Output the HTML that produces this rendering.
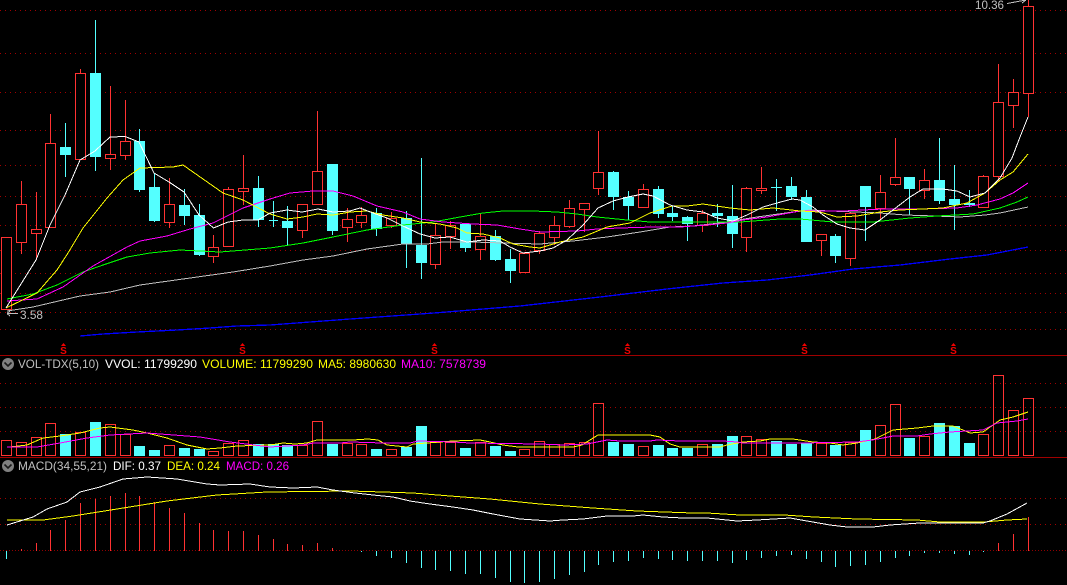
<!DOCTYPE html>
<html>
<head>
<meta charset="utf-8">
<title>Stock chart</title>
<style>
html,body{margin:0;padding:0;background:#000;width:1067px;height:585px;overflow:hidden}
svg{display:block;position:absolute;left:0;top:0}
text{font-family:"Liberation Sans",sans-serif;font-size:12px}
</style>
</head>
<body>
<svg width="1067" height="585" viewBox="0 0 1067 585" xmlns="http://www.w3.org/2000/svg">
<rect width="1067" height="585" fill="#000"/>
<g shape-rendering="crispEdges">
<!-- grids -->
<path fill="none" stroke="#a00000" stroke-dasharray="1 4" d="M0 10.500H1067M0 53.500H1067M0 92.500H1067M0 130.500H1067M0 165.500H1067M0 196.500H1067M0 225.500H1067M0 250.500H1067M0 273.500H1067M0 293.500H1067M0 312.500H1067M0 329.500H1067M0 383.500H1067M0 407.500H1067M0 431.500H1067M0 498.500H1067M0 524.500H1067"/>
<path fill="none" stroke="#900000" stroke-dasharray="1 2" d="M0 550.500H1067"/>
<path fill="none" stroke="#a00000" d="M0 355.500H1067M0 457.500H1067"/>

<!-- red wicks -->
<path fill="none" stroke="#ff3232" d="M21.500 181V254M36.500 192V260M50.500 114V143M80.500 69V73M110.500 86V170M125.500 100V160M169.500 178V228M213.500 235V263M228.500 187V247M243.500 155V205M302.500 230V238M317.500 111V171M347.500 208V242M361.500 207V228M391.500 212V228M435.500 223V269M450.500 221V249M480.500 213V260M524.500 252V253M539.500 231V254M554.500 216V245M569.500 200V228M584.500 209V232M598.500 131V195M643.500 184V189M702.500 210V232M746.500 187V252M761.500 167V194M821.500 240V256M850.500 212V266M880.500 175V219M895.500 138V186M924.500 169V199M983.500 175V208M998.500 64V182M1013.500 79V128M1028.500 0V117"/>
<!-- red bodies -->
<path fill="#000" stroke="#ff3232" d="M1.500 237.500h10v72h-10zM16.500 204.500h10v38h-10zM31.500 229.500h10v4h-10zM45.500 143.500h10v84h-10zM75.500 73.500h10v86h-10zM105.500 154.500h10v4h-10zM120.500 141.500h10v14h-10zM164.500 204.500h10v18h-10zM208.500 247.500h10v9h-10zM223.500 189.500h10v57h-10zM238.500 188.500h10v3h-10zM297.500 204.500h10v26h-10zM312.500 171.500h10v33h-10zM342.500 219.500h10v8h-10zM356.500 215.500h10v7h-10zM386.500 218.500h10v7h-10zM430.500 235.500h10v29h-10zM445.500 225.500h10v11h-10zM475.500 236.500h10v13h-10zM519.500 253.500h10v19h-10zM534.500 233.500h10v17h-10zM549.500 225.500h10v12h-10zM564.500 208.500h10v18h-10zM579.500 203.500h10v6h-10zM593.500 172.500h10v16h-10zM638.500 189.500h10v18h-10zM697.500 213.500h10v12h-10zM741.500 188.500h10v49h-10zM756.500 188.500h10v2h-10zM816.500 234.500h10v6h-10zM845.500 213.500h10v45h-10zM875.500 192.500h10v16h-10zM890.500 177.500h10v7h-10zM919.500 180.500h10v10h-10zM978.500 176.500h10v31h-10zM993.500 102.500h10v74h-10zM1008.500 92.500h10v13h-10zM1023.500 6.500h10v87h-10z"/>
<!-- cyan wicks -->
<path fill="none" stroke="#54ffff" d="M65.500 123V177M95.500 20V171M139.500 129V192M154.500 173V222M184.500 189V225M199.500 204V256M258.500 176V227M273.500 201V227M269 220.500H278M287.500 206V246M332.500 164V235M376.500 208V236M406.500 211V268M421.500 158V279M465.500 223V252M495.500 230V261M510.500 249V283M613.500 171V210M628.500 191V220M658.500 186V218M672.500 206V221M687.500 216V241M717.500 204V227M732.500 185V248M776.500 179V211M771 187.500H782M791.500 177V200M806.500 190V242M835.500 234V263M865.500 186V241M909.500 177V215M939.500 138V204M954.500 165V230M969.500 190V207"/>
<!-- cyan bodies -->
<path fill="#54ffff" d="M60 147h11v8h-11zM90 73h11v84h-11zM134 141h11v49h-11zM149 187h11v34h-11zM179 205h11v11h-11zM194 215h11v40h-11zM253 188h11v32h-11zM282 221h11v7h-11zM327 164h11v67h-11zM371 213h11v16h-11zM401 218h11v26h-11zM416 245h11v18h-11zM460 224h11v24h-11zM490 236h11v24h-11zM505 259h11v12h-11zM608 172h11v25h-11zM623 197h11v9h-11zM653 189h11v25h-11zM667 213h11v4h-11zM682 217h11v7h-11zM712 213h11v3h-11zM727 216h11v18h-11zM786 186h11v11h-11zM801 197h11v45h-11zM830 236h11v20h-11zM860 186h11v21h-11zM904 177h11v12h-11zM934 180h11v21h-11zM949 199h11v6h-11zM964 203h11v2h-11z"/>

<!-- main MAs -->
<polyline fill="none" stroke="#0000ff" stroke-width="1.3" points="80,336 103,334 137,332 177,330 210,328 237,326 270,325 350,319 434,313 520,306 600,297 667,289 723,283 767,280 810,275 853,269 900,265 950,259 987,255 1028,247"/>
<polyline fill="none" stroke="#c0c0c0" stroke-width="1" points="7,311 33,307 80,296 110,292 140,285 183,279 233,272 270,266 303,260 333,256 367,249 403,244 427,244 443,242 473,242 503,243 540,244 573,241 607,237 640,232 670,227 693,226 720,223 757,217 793,212 810,210 830,211 880,213 905,215 935,216 960,217 985,215 1000,213 1028,207"/>
<polyline fill="none" stroke="#00ff00" stroke-width="1" points="7,299 33,294 57,285 83,272 103,265 127,257 150,253 180,250 220,252 270,248 303,243 333,237 367,230 403,225 433,222 460,217 483,213 503,211 533,211 557,212 577,214 597,217 627,220 650,222 690,222 740,222 780,219 800,219 833,222 873,222 910,218 937,216 973,214 1000,208 1017,202 1028,197"/>
<polyline fill="none" stroke="#ff00ff" stroke-width="1" points="7,301 37,299 63,287 93,266 127,247 140,241 167,236 190,229 213,223 243,208 270,199 290,193 313,191 333,191 353,196 377,206 403,212 420,219 443,222 473,224 497,225 520,229 540,232 577,231 597,229 620,228 653,227 680,227 707,225 727,223 743,220 767,217 800,211 843,211 883,209 917,209 957,208 977,205 1000,199 1013,193 1028,183"/>
<polyline fill="none" stroke="#ffff00" stroke-width="1" points="6,308 37,293 57,270 68,253 83,228 107,198 123,180 140,168 173,167 183,165 203,179 223,193 243,200 270,214 287,219 303,217 317,214 333,215 350,212 367,211 383,215 403,218 420,222 440,224 457,228 467,233 483,234 500,238 513,244 530,247 540,248 560,242 583,237 607,227 630,223 650,213 672,206 687,206 703,204 730,208 750,210 773,208 800,211 820,212 837,217 857,216 880,212 900,210 923,209 943,208 967,203 985,193 1000,180 1013,172 1028,154"/>
<polyline fill="none" stroke="#ffffff" stroke-width="1" points="6,308 36,260 50,225 65,195 80,160 95,151 110,137 125,136.500 139,142 154,173 169,182 184,192 199,215 213.500,228 228,222 243,220 258,220 270,213 287,210 302,212 318,209 333,212 350,211 360,208 373,213 387,218 403,226 420,234 435,238 450,237 467,242 483,240 500,241 510,247 523,253 540,251 553,248 567,240 583,225 598,208 613,201 628,197 643,194 653,196 670,205 687,210 703,212 717,218 733,221 747,215 763,207 777,203 792,199 800,200 813,207 823,215 837,224 850,228 865,230 880,220 893,210 910,197 923,189 943,189 957,191 970,197 985,193 1000,178 1012,158 1020,137 1028,117"/>

<!-- volume bars -->
<path fill="#54ffff" d="M60 434h11v22h-11zM90 422h11v34h-11zM134 446h11v10h-11zM149 450h11v6h-11zM179 448h11v8h-11zM194 449h11v7h-11zM253 444h11v12h-11zM268 444h11v12h-11zM282 445h11v11h-11zM327 444h11v12h-11zM371 449h11v7h-11zM401 447h11v9h-11zM416 426h11v30h-11zM460 448h11v8h-11zM490 446h11v10h-11zM505 451h11v5h-11zM608 442h11v14h-11zM623 444h11v12h-11zM653 445h11v11h-11zM667 448h11v8h-11zM682 448h11v8h-11zM712 444h11v12h-11zM727 436h11v20h-11zM771 441h11v15h-11zM786 444h11v12h-11zM801 443h11v13h-11zM830 445h11v11h-11zM860 430h11v26h-11zM904 438h11v18h-11zM934 423h11v33h-11zM949 426h11v30h-11zM964 443h11v13h-11z"/>
<path fill="none" stroke="#ff3232" d="M1.500 440.500h10v15h-10zM16.500 442.500h10v13h-10zM31.500 437.500h10v18h-10zM45.500 423.500h10v32h-10zM75.500 432.500h10v23h-10zM105.500 424.500h10v31h-10zM120.500 434.500h10v21h-10zM164.500 445.500h10v10h-10zM208.500 451.500h10v4h-10zM223.500 443.500h10v12h-10zM238.500 440.500h10v15h-10zM297.500 445.500h10v10h-10zM312.500 421.500h10v34h-10zM342.500 443.500h10v12h-10zM356.500 444.500h10v11h-10zM386.500 449.500h10v6h-10zM430.500 442.500h10v13h-10zM445.500 442.500h10v13h-10zM475.500 442.500h10v13h-10zM519.500 449.500h10v6h-10zM534.500 441.500h10v14h-10zM549.500 444.500h10v11h-10zM564.500 443.500h10v12h-10zM579.500 442.500h10v13h-10zM593.500 403.500h10v52h-10zM638.500 446.500h10v9h-10zM697.500 444.500h10v11h-10zM741.500 436.500h10v19h-10zM756.500 439.500h10v16h-10zM816.500 443.500h10v12h-10zM845.500 442.500h10v13h-10zM875.500 425.500h10v30h-10zM890.500 404.500h10v51h-10zM919.500 436.500h10v19h-10zM978.500 434.500h10v21h-10zM993.500 375.500h10v80h-10zM1008.500 410.500h10v45h-10zM1023.500 398.500h10v57h-10z"/>
<polyline fill="none" stroke="#ffff00" stroke-width="1" points="10,447 27,445 43,438 60,436 80,433 100,428 110,427 133,430 147,433 167,438 187,445 207,449 220,448 237,446 270,445 283,443 295,444 307,443 317,440 353,440 368,439 378,440 387,445 407,447 413,444 427,443 440,442 453,441 480,440 490,442 503,445 518,447 532,447 540,447 573,447 582,445 598,435 650,435 660,437 670,444 680,447 720,447 727,445 743,442 760,441 770,439 793,439 813,442 830,443 843,445 857,443 875,439 893,430 917,428 933,426 953,426 963,430 970,433 983,432 993,425 1000,420 1013,417 1028,412"/>
<polyline fill="none" stroke="#ff00ff" stroke-width="1" points="7,447 37,447 60,443 87,438 110,435 147,433 200,437 230,442 270,447 303,445 313,443 340,443 350,442 383,443 410,443 418,441 453,442 470,443 540,444 563,445 587,444 597,442 607,440 620,441 650,441 657,440 680,441 723,441 737,442 743,443 783,443 800,443 857,442 872,440 883,438 893,436 917,436 930,434 950,432 983,430 997,423 1017,421 1028,419"/>

<!-- MACD bars -->
<path fill="none" stroke="#ff3232" d="M21.500 549V551M36.500 543V551M50.500 530V551M65.500 520V551M80.500 503V551M95.500 499V551M110.500 496V551M125.500 493V551M139.500 496V551M154.500 502V551M169.500 508V551M184.500 513V551M199.500 523V551M213.500 530V551M228.500 531V551M243.500 531V551M258.500 535V551M273.500 539V551M287.500 544V551M302.500 545V551M317.500 543V551M332.500 548V551M998.500 543V551M1013.500 534V551M1028.500 517V551"/>
<path fill="none" stroke="#54ffff" d="M6.500 551V559M361.500 551V552M376.500 551V556M391.500 551V558M406.500 551V563M421.500 551V568M435.500 551V570M450.500 551V571M465.500 551V574M480.500 551V574M495.500 551V578M510.500 551V582M524.500 551V583M539.500 551V582M554.500 551V579M569.500 551V575M584.500 551V572M598.500 551V565M613.500 551V562M628.500 551V561M643.500 551V558M658.500 551V559M672.500 551V560M687.500 551V561M702.500 551V561M717.500 551V561M732.500 551V563M746.500 551V560M761.500 551V558M776.500 551V556M791.500 551V555M806.500 551V559M821.500 551V562M835.500 551V567M850.500 551V566M865.500 551V565M880.500 551V562M895.500 551V558M909.500 551V556M924.500 551V553M939.500 551V553M954.500 551V554M969.500 551V555M983.500 551V552"/>
<polyline fill="none" stroke="#ffff00" stroke-width="1" points="7,520 43,520 73,516 117,509 167,501 217,495 267,492 350,491 383,492 413,493 450,496 490,499 540,504 593,508 637,511 693,513 707,513 740,515 784,515 814,517 857,519 917,520 940,522 984,522 1007,520 1027,519"/>
<polyline fill="none" stroke="#ffffff" stroke-width="1" points="7,525 20,521 33,517 47,509 67,502 80,492 100,487 123,479 147,477 177,479 207,484 220,485 250,484 270,487 293,488 317,487 333,490 355,493 373,495 393,497 410,501 430,504 453,507 473,510 493,514 520,519 550,521 563,520 583,519 607,516 633,516 643,515 663,517 683,518 707,518 727,520 737,521 757,520 790,518 807,521 830,525 847,527 873,527 890,525 920,523 983,523 990,521 1007,514 1027,503"/>

<!-- price callouts -->
<path fill="none" stroke="#c0c0c0" d="M7 313.500H18M7 313.500L10 311M7 313.500L10 316M1007 3.500L1026 0M1026 0L1022 3"/>
</g>

<text x="975" y="9" fill="#c0c0c0" textLength="29" lengthAdjust="spacingAndGlyphs">10.36</text>
<text x="20" y="319" fill="#c0c0c0" textLength="23" lengthAdjust="spacingAndGlyphs">3.58</text>

<!-- signal marks -->
<g fill="#f00000">
<path d="M63.500 343l-2.500 3h5zM242.500 343l-2.500 3h5zM434.500 343l-2.500 3h5zM627.500 343l-2.500 3h5zM804.500 343l-2.500 3h5zM953.500 343l-2.500 3h5z"/>
<g text-anchor="middle">
<text x="63.500" y="354" style="font-size:10px;font-weight:bold">S</text>
<text x="242.500" y="354" style="font-size:10px;font-weight:bold">S</text>
<text x="434.500" y="354" style="font-size:10px;font-weight:bold">S</text>
<text x="627.500" y="354" style="font-size:10px;font-weight:bold">S</text>
<text x="804.500" y="354" style="font-size:10px;font-weight:bold">S</text>
<text x="953.500" y="354" style="font-size:10px;font-weight:bold">S</text>
</g>
</g>

<!-- chevron icons -->
<circle cx="8" cy="364" r="6" fill="#808080"/>
<path d="M4.500 362.500L8 366L11.500 362.500" fill="none" stroke="#1a1a1a" stroke-width="1.6"/>
<circle cx="8" cy="466" r="6" fill="#808080"/>
<path d="M4.500 464.500L8 468L11.500 464.500" fill="none" stroke="#1a1a1a" stroke-width="1.6"/>

<!-- labels -->
<text x="18" y="368" fill="#c0c0c0" textLength="81" lengthAdjust="spacingAndGlyphs">VOL-TDX(5,10)</text>
<text x="105" y="368" fill="#ffffff" textLength="92" lengthAdjust="spacingAndGlyphs">VVOL: 11799290</text>
<text x="202" y="368" fill="#ffff00" textLength="111" lengthAdjust="spacingAndGlyphs">VOLUME: 11799290</text>
<text x="318" y="368" fill="#ffff00" textLength="78" lengthAdjust="spacingAndGlyphs">MA5: 8980630</text>
<text x="401" y="368" fill="#ff00ff" textLength="85" lengthAdjust="spacingAndGlyphs">MA10: 7578739</text>

<text x="18" y="470" fill="#c0c0c0" textLength="89" lengthAdjust="spacingAndGlyphs">MACD(34,55,21)</text>
<text x="113" y="470" fill="#ffffff" textLength="48" lengthAdjust="spacingAndGlyphs">DIF: 0.37</text>
<text x="167" y="470" fill="#ffff00" textLength="53" lengthAdjust="spacingAndGlyphs">DEA: 0.24</text>
<text x="226" y="470" fill="#ff00ff" textLength="63" lengthAdjust="spacingAndGlyphs">MACD: 0.26</text>
</svg>
</body>
</html>
